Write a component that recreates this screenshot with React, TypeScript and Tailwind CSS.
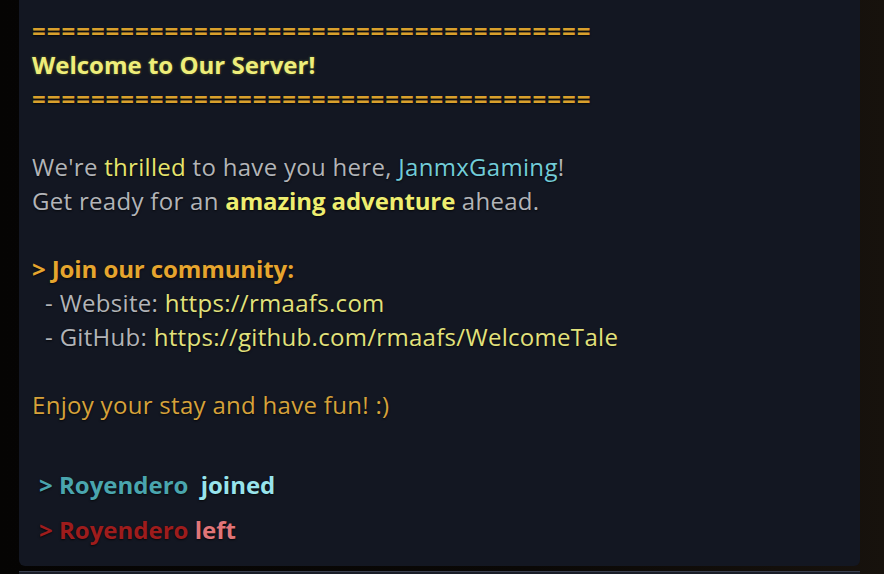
const bar = "======================================";

export default function App() {
    return (
        <div
            className="w-full h-[574px] overflow-hidden flex flex-col bg-[linear-gradient(90deg,#050403_0%,#0a0806_60%,#17120d_100%)]"
            style={{ fontFamily: "'Open Sans', Lato, sans-serif" }}
        >
            <div className="flex-1 flex">
                <div className="w-[19px]" />
                {/* Chat panel */}
                <div className="flex-1 mr-[24px] h-[566px] rounded-b-md bg-[#131722] pt-[14px] pl-[13px] text-[24px] leading-[34px] tracking-[0.3px] text-[#b2b4b8] [text-shadow:0_1px_2px_rgba(0,0,0,0.7)]">
                    <div className="font-bold text-[#d9a02c] tracking-[1px]">{bar}</div>
                    <div className="font-bold tracking-[0px] text-[#eeee7a] [text-shadow:0_0_3px_rgba(180,180,40,0.45)]">
                        Welcome to Our Server!
                    </div>
                    <div className="font-bold text-[#d9a02c] tracking-[1px]">{bar}</div>
                    <div>&nbsp;</div>
                    <div>
                        We're <span className="text-[#e6e46c]">thrilled</span> to have you here,{" "}
                        <span className="text-[#72ccd8]">JanmxGaming</span>!
                    </div>
                    <div>
                        Get ready for an{" "}
                        <span className="font-bold tracking-[-0.1px] text-[#eeee70]">amazing adventure</span> ahead.
                    </div>
                    <div>&nbsp;</div>
                    <div className="font-bold tracking-[-0.1px] text-[#e6a52e]">&gt; Join our community:</div>
                    <div>
                        &nbsp; - Website: <span className="text-[#e2e27c]">https://rmaafs.com</span>
                    </div>
                    <div>
                        &nbsp; - GitHub:{" "}
                        <span className="text-[#e2e27c]">https://github.com/rmaafs/WelcomeTale</span>
                    </div>
                    <div>&nbsp;</div>
                    <div className="text-[#d6a23a]">Enjoy your stay and have fun! :)</div>

                    {/* join / leave messages */}
                    <div className="mt-[46px] pl-[7px] flex flex-col gap-[11px] font-bold tracking-[0px]">
                        <div>
                            <span className="text-[#4aa5ae]">&gt; Royendero</span>{" "}
                            <span className="ml-[6px] text-[#98e4ec]">joined</span>
                        </div>
                        <div>
                            <span className="text-[#9e1c1c]">&gt; Royendero</span>{" "}
                            <span className="text-[#e07578]">left</span>
                        </div>
                    </div>
                </div>
            </div>
            <div className="mx-[19px] mr-[24px] h-[3px] border-t border-[#3a4050] bg-[#1a1e28]" />
        </div>
    );
}
